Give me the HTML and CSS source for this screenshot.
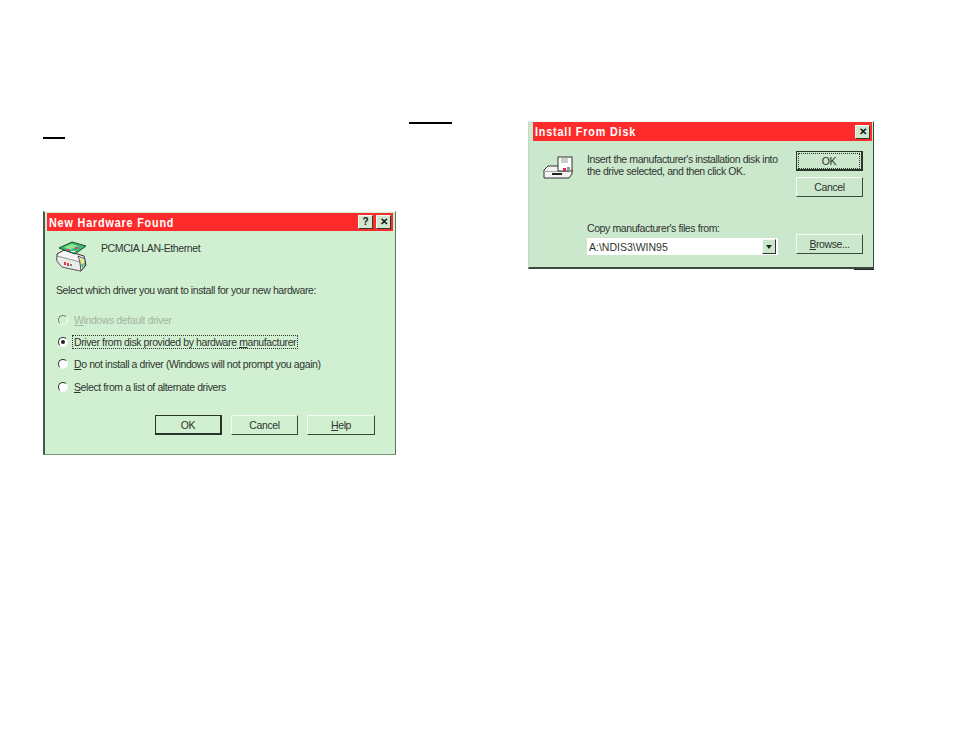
FILE: index.html
```html
<!DOCTYPE html>
<html lang="en">
<head>
<meta charset="UTF-8">
<title>Installing the PCMCIA LAN card</title>
<link rel="stylesheet" href="styles.css">
</head>
<body>
<div class="page">

    <!-- left column: two link rules, then the hardware dialog -->
    <div class="col-left">
        <div class="rule rule--first"></div>
        <div class="rule rule--second"></div>

        <div class="dialog dialog--hardware">
            <div class="titlebar">
                <span class="titlebar__text">New Hardware Found</span>
                <button class="title-btn">?</button>
                <button class="title-btn title-btn--close">&#10005;</button>
            </div>
            <div class="hardware-body">
                <div class="device">
                    <svg class="icon-card" width="31" height="31" viewBox="0 0 31 31">
                        <polygon points="1,13 8,9 28,15 30,24 25,30 6,26 1,20" fill="#f4f4f4" stroke="#333" stroke-width="1"/>
                        <polygon points="1,15 24,21 25,30 6,26 1,20" fill="#e8ebe8" stroke="#555" stroke-width="0.6"/>
                        <polygon points="3,7 16,1 30,5 19,13" fill="#3dbb70" stroke="#1d4a2a" stroke-width="1"/>
                        <polygon points="8,6 16,3 22,5 14,9" fill="#93e58e"/>
                        <rect x="19" y="6" width="3" height="2" fill="#d63ab0"/>
                        <rect x="11" y="8" width="3" height="2" fill="#d63ab0"/>
                        <rect x="15" y="10" width="4" height="1" fill="#fff"/>
                        <polygon points="22,15 29,18 29,25 25,30 24,21" fill="#e4f0e0" stroke="#333" stroke-width="0.8"/>
                        <polygon points="24,18 27,19 26,24" fill="#e8e832"/>
                        <polygon points="25,24 28,22 27,28" fill="#37b56a"/>
                        <rect x="8" y="21" width="2" height="3" fill="#e23c3c"/>
                        <rect x="11" y="22" width="2" height="3" fill="#e23c3c"/>
                        <rect x="14" y="23" width="2" height="2" fill="#777"/>
                    </svg>
                    <span class="device__name">PCMCIA LAN-Ethernet</span>
                </div>
                <p class="prompt">Select which driver you want to install for your new hardware:</p>
                <div class="options">
                    <div class="option option--disabled"><span class="radio"></span><span class="option__text"><u>W</u>indows default driver</span></div>
                    <div class="option"><span class="radio radio--on"></span><span class="option__text option__text--focus">Driver from disk provided by hardware <u>m</u>anufacturer</span></div>
                    <div class="option"><span class="radio"></span><span class="option__text"><u>D</u>o not install a driver (Windows will not prompt you again)</span></div>
                    <div class="option"><span class="radio"></span><span class="option__text"><u>S</u>elect from a list of alternate drivers</span></div>
                </div>
                <div class="button-row">
                    <button class="btn btn--default">OK</button>
                    <button class="btn">Cancel</button>
                    <button class="btn btn--help"><u>H</u>elp</button>
                </div>
            </div>
        </div>
    </div>

    <!-- right column: the install from disk dialog -->
    <div class="col-right">
        <div class="dialog dialog--disk">
            <div class="titlebar">
                <span class="titlebar__text">Install From Disk</span>
                <button class="title-btn title-btn--close">&#10005;</button>
            </div>
            <div class="disk-body">
                <svg class="icon-drive" width="30" height="23" viewBox="0 0 30 23">
                    <polygon points="1,14 5,10 27,10 29,14 29,18 26,22 1,22" fill="#f2f2f2" stroke="#333" stroke-width="1"/>
                    <rect x="1" y="15" width="25" height="1" fill="#aaa"/>
                    <rect x="9" y="17" width="10" height="2" fill="#222"/>
                    <rect x="15" y="1" width="14" height="14" fill="#fff" stroke="#333" stroke-width="1"/>
                    <rect x="18" y="2" width="7" height="5" fill="#c9cfc9"/>
                    <rect x="20" y="12" width="3" height="3" fill="#d8304a"/>
                    <rect x="24" y="11" width="3" height="4" fill="#999"/>
                </svg>
                <div class="disk-main">
                    <p class="disk-text">Insert the manufacturer's installation disk into the drive selected, and then click OK.</p>
                    <label class="disk-label">Copy manufacturer's files from:</label>
                    <div class="combo">
                        <span class="combo__value">A:\NDIS3\WIN95</span>
                        <span class="combo__arrow"></span>
                    </div>
                </div>
                <div class="disk-buttons">
                    <button class="btn btn--default btn--focus"><span>OK</span></button>
                    <button class="btn btn--cancel">Cancel</button>
                    <button class="btn btn--browse"><u>B</u>rowse...</button>
                </div>
            </div>
        </div>
        <div class="dialog-mark"></div>
    </div>

</div>
</body>
</html>
```

FILE: styles.css
```css
:root
{
    --text-colour: #2f342f;
    --title-red: #fd2b2b;
    --hardware-green: #d1f0d2;
    --disk-green: #cbe8cc;
}

body
{
    margin: 0;
    background-color: #fff;
    font-family: "Liberation Sans", Arial, sans-serif;
    font-size: 10.5px;
    letter-spacing: -0.4px;
    color: var(--text-colour);
}

p
{
    margin: 0;
}

.page
{
    display: flex;
    height: 737px;
}

.col-left
{
    width: 353px;
    margin-left: 43px;
    padding-top: 122px;
}

.col-right
{
    width: 346px;
    margin-left: 132px;
    padding-top: 121px;
}

.rule
{
    height: 2px;
    background-color: #000;
}

.rule--first
{
    width: 43px;
    margin-left: 366px;
}

.rule--second
{
    width: 22px;
    margin-top: 13px;
}

.dialog
{
    box-sizing: border-box;
    border-top: 1px solid #f4fbf4;
}

.dialog--hardware
{
    margin-top: 72px;
    height: 244px;
    padding: 1px 2px 0 2px;
    background-color: var(--hardware-green);
    border-left: 2px solid #4a5a4a;
    border-right: 1px solid #5d7a5d;
    border-bottom: 1px solid #6f9a6f;
}

.dialog--disk
{
    height: 148px;
    padding: 0 1px 0 4px;
    background-color: var(--disk-green);
    border-left: 1px solid #c8d8c8;
    border-right: 1px solid #3a4a3a;
    border-bottom: 2px solid #3a4a3a;
}

.dialog-mark
{
    width: 20px;
    height: 1px;
    margin-left: auto;
    background-color: #222;
}

.titlebar
{
    display: flex;
    align-items: center;
    height: 18px;
    padding: 0 2px 0 2px;
    gap: 3px;
    background-color: var(--title-red);
}

.dialog--disk .titlebar
{
    height: 19px;
}

/* the old title font is tall and narrow */
.titlebar__text
{
    flex: 1;
    color: #fff;
    font-size: 13px;
    font-weight: bold;
    letter-spacing: 1px;
    transform: scaleX(0.83);
    transform-origin: left center;
}

.title-btn
{
    box-sizing: border-box;
    width: 15px;
    height: 14px;
    padding: 0;
    font-family: "Liberation Sans", Arial, sans-serif;
    font-size: 10px;
    font-weight: bold;
    line-height: 12px;
    color: #111;
    background-color: #cfe8cf;
    border: 1px solid;
    border-color: #f4fbf4 #2e3a2e #2e3a2e #f4fbf4;
}

/* dialog one */

.hardware-body
{
    padding: 10px 0 0 9px;
}

.device
{
    display: flex;
    align-items: flex-start;
    height: 31px;
    gap: 14px;
}

.device__name
{
    margin-top: 1px;
}

.prompt
{
    margin-top: 12px;
    line-height: 12px;
}

.options
{
    display: flex;
    flex-direction: column;
    gap: 9.4px;
    margin-top: 17px;
    margin-left: 2px;
}

.option
{
    display: flex;
    align-items: center;
    height: 13px;
    gap: 4px;
}

.option--disabled
{
    color: #a4b4a4;
}

.option__text
{
    padding: 0 1px;
    line-height: 12px;
    border: 1px solid transparent;
}

.option__text--focus
{
    border: 1px dotted #333;
}

.radio
{
    box-sizing: border-box;
    position: relative;
    width: 10px;
    height: 10px;
    flex: none;
    border-radius: 50%;
    background-color: #fff;
    border: 1px solid;
    border-color: #333 #f4fbf4 #f4fbf4 #333;
}

.option--disabled .radio
{
    background-color: var(--hardware-green);
    border-color: #777 #f4fbf4 #f4fbf4 #777;
}

.radio--on::after
{
    content: "";
    position: absolute;
    left: 2px;
    top: 2px;
    width: 4px;
    height: 4px;
    border-radius: 50%;
    background-color: #222;
}

.btn
{
    box-sizing: border-box;
    width: 67px;
    height: 20px;
    padding: 0;
    font-family: "Liberation Sans", Arial, sans-serif;
    font-size: 10.5px;
    letter-spacing: -0.4px;
    color: var(--text-colour);
    background-color: inherit;
    border: 1px solid;
    border-color: #f4fbf4 #3a4a3a #3a4a3a #f4fbf4;
}

.btn--default
{
    border-style: solid;
    border-color: #2a352a;
    border-width: 1px 2px 2px 1px;
}

.btn--help
{
    width: 68px;
}

.button-row
{
    display: flex;
    justify-content: flex-end;
    gap: 9px;
    margin-top: 22px;
    margin-right: 18px;
}

/* dialog two */

.disk-body
{
    display: flex;
    padding-top: 10px;
}

.icon-drive
{
    flex: none;
    margin: 5px 0 0 10px;
}

.disk-main
{
    width: 191px;
    margin-left: 14px;
}

.disk-text
{
    width: 200px;
    line-height: 12px;
    margin-top: 2px;
}

.disk-label
{
    display: block;
    margin-top: 45px;
    line-height: 12px;
}

.combo
{
    display: flex;
    align-items: center;
    height: 17px;
    margin-top: 4px;
    padding: 0 2px;
    background-color: #fff;
}

.combo__value
{
    flex: 1;
    font-size: 10.5px;
    letter-spacing: 0;
}

.combo__arrow
{
    display: flex;
    align-items: center;
    justify-content: center;
    box-sizing: border-box;
    width: 14px;
    height: 15px;
    background-color: var(--disk-green);
    border: 1px solid;
    border-color: #f4fbf4 #333 #333 #f4fbf4;
}

.combo__arrow::after
{
    content: "";
    border-left: 3px solid transparent;
    border-right: 3px solid transparent;
    border-top: 4px solid #222;
}

.disk-buttons
{
    display: flex;
    flex-direction: column;
    margin-left: 18px;
}

.btn--cancel
{
    margin-top: 6px;
}

.btn--browse
{
    margin-top: 37px;
}

.btn--focus span
{
    display: block;
    margin: 1px;
    line-height: 14px;
    border: 1px dotted #333;
}
```
